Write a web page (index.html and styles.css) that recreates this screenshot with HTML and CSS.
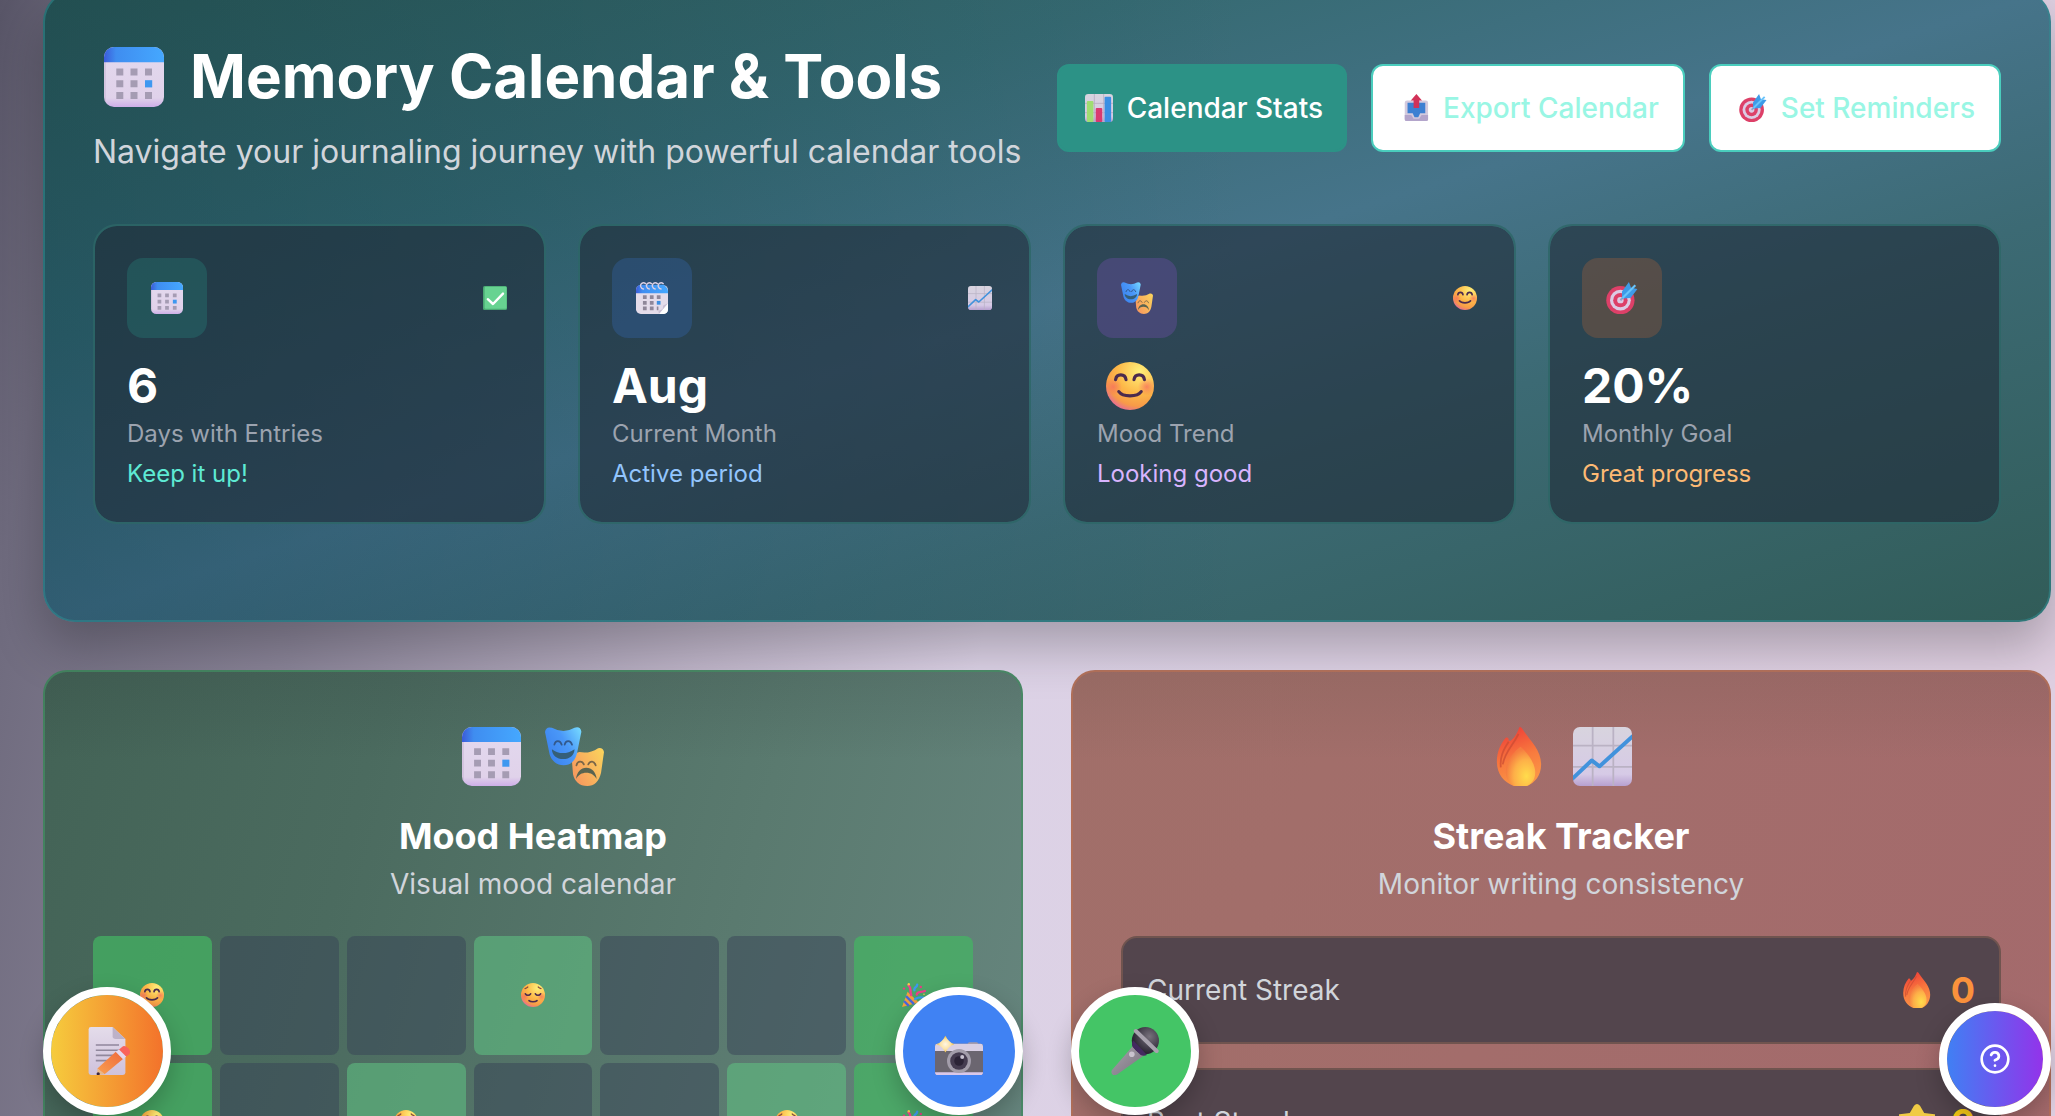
FILE: index.html
```
<!DOCTYPE html>
<html lang="en">
<head>
<meta charset="utf-8">
<title>Memory Calendar &amp; Tools</title>
<link rel="stylesheet" href="styles.css">
</head>
<body>
<svg class="sprite" width="0" height="0" aria-hidden="true">
  <defs>
    <linearGradient id="g-head" x1="0" x2="1"><stop offset="0" stop-color="#3b5bd9"/><stop offset=".2" stop-color="#3f8df0"/><stop offset="1" stop-color="#45a8ff"/></linearGradient>
    <linearGradient id="g-paper" x1="0" x2="0" y1="0" y2="1"><stop offset="0" stop-color="#e3d9ee"/><stop offset=".85" stop-color="#e0d2ea"/><stop offset="1" stop-color="#cdaee8"/></linearGradient>
    <linearGradient id="g-maskb" x1="0" x2="1" y1=".6" y2="0"><stop offset="0" stop-color="#3c83ee"/><stop offset=".5" stop-color="#4a98f8"/><stop offset="1" stop-color="#78dcff"/></linearGradient>
    <linearGradient id="g-masky" x1="0" x2="1" y1=".6" y2="0"><stop offset="0" stop-color="#f79a5e"/><stop offset="1" stop-color="#fbd65c"/></linearGradient>
    <radialGradient id="g-face" cx=".7" cy=".2" r=".85"><stop offset="0" stop-color="#fff07a"/><stop offset=".55" stop-color="#fdb848"/><stop offset=".85" stop-color="#f79a48"/><stop offset="1" stop-color="#e8728c"/></radialGradient>
    <radialGradient id="g-cheek"><stop offset="0" stop-color="#f76f5e" stop-opacity=".75"/><stop offset="1" stop-color="#f76f5e" stop-opacity="0"/></radialGradient>
    <linearGradient id="g-flame" x1=".4" x2=".7" y1="0" y2="1"><stop offset="0" stop-color="#ee4038"/><stop offset=".5" stop-color="#f87a3e"/><stop offset="1" stop-color="#fb9a48"/></linearGradient>
    <radialGradient id="g-flamein" cx=".7" cy=".75" r=".7"><stop offset="0" stop-color="#ffdc4c"/><stop offset=".6" stop-color="#fdb048"/><stop offset="1" stop-color="#f57c40"/></radialGradient>
    <linearGradient id="g-chart" x1="0" x2="0" y1="0" y2="1"><stop offset="0" stop-color="#d8d4de"/><stop offset=".8" stop-color="#d6cae6"/><stop offset="1" stop-color="#b7a0d0"/></linearGradient>
    <linearGradient id="g-pencil" x1="0" x2="1" y1="1" y2="0"><stop offset="0" stop-color="#f9a050"/><stop offset="1" stop-color="#ee6a3c"/></linearGradient>
    <linearGradient id="g-doc" x1="0" x2="0" y1="0" y2="1"><stop offset="0" stop-color="#e4dcea"/><stop offset="1" stop-color="#cfc2dc"/></linearGradient>
    <linearGradient id="g-mic" x1="0" x2="1" y1="0" y2="1"><stop offset="0" stop-color="#aaa4ae"/><stop offset="1" stop-color="#77707c"/></linearGradient>
    <radialGradient id="g-michead" cx=".65" cy=".35" r=".6"><stop offset="0" stop-color="#77717c"/><stop offset="1" stop-color="#2c2735"/></radialGradient>
    <radialGradient id="g-spark"><stop offset="0" stop-color="#fff6e4"/><stop offset=".6" stop-color="#fbe2a4"/><stop offset="1" stop-color="#f0bf3e"/></radialGradient>
    <clipPath id="c-cal"><rect width="60" height="60" rx="10"/></clipPath>
    <clipPath id="c-chart"><rect width="60" height="60" rx="7"/></clipPath>
  </defs>
  <symbol id="calendar" viewBox="0 0 60 60">
    <g clip-path="url(#c-cal)"><path fill="url(#g-paper)" d="M0 0h60v60H0z"/><path fill="#b9a6c8" opacity=".35" d="M0 15h2v45H0z"/><path fill="url(#g-head)" d="M0 0h60v15.2H0z"/></g>
    <path fill="#a59cb3" d="M12.3 21.5h7v7h-7zM26.5 21.5h7v7h-7zM41 21.5h7v7h-7zM12.3 33.2h7v7h-7zM26.5 33.2h7v7h-7zM12.3 45h7v7h-7zM26.5 45h7v7h-7zM41 45h7v7h-7z"/>
    <path fill="#3e98f0" d="M41 33.2h7.2v7.2H41z"/>
  </symbol>
  <symbol id="spiral" viewBox="0 0 60 60">
    <rect y="6" width="60" height="54" rx="9" fill="#e4dcea"/>
    <path fill="url(#g-head)" d="M0 21v-5Q0 6 9 5h43q8 6 8 13v3z"/>
    <path fill="#fff" d="M60 40 43 60h9q8-1 8-9z"/><path fill="#c9bfd4" d="m60 40-17 20-1-6 8-3 1-7z"/>
    <path fill="#8f8799" d="M13 25h7v7h-7zM26 25h7v7h-7zM39 25h7v7h-7zM13 35.500h7v7h-7zM26 35.500h7v7h-7zM13 46h7v7h-7zM26 46h7v7h-7zM39 46h3v7h-3z"/>
    <path fill="#3e8fe0" d="M39 35.500h7v7h-7z"/>
    <g fill="none" stroke="#d9cfe4" stroke-width="2.600" stroke-linecap="round"><path d="M18 3c-5-4-11 1-9 6 1 3 3 4 5 4"/><path d="M29 3c-5-4-11 1-9 6 1 3 3 4 5 4"/><path d="M40 3c-5-4-11 1-9 6 1 3 3 4 5 4"/><path d="M51 3c-5-4-11 1-9 6 1 3 3 4 5 4"/></g>
  </symbol>
  <symbol id="masks" viewBox="0 0 60 60">
    <path fill="url(#g-masky)" d="M27 30Q32 26 35 25.500q10 2 19-4 5-1 6 4l-3 21c-2 9-7 13.500-14 13.500-8 0-13-5-14.500-12z"/>
    <g fill="none" stroke="#7a6648" stroke-width="1.800" stroke-linecap="round"><path d="M32 39c1-5 6-5 7.500-1M44 38c2-4 6-4 7.500 1"/></g>
    <path fill="#5a6450" d="M31.500 53c1-7.500 5-11.500 10.500-11.500S52 46 52.500 53c-2.500-4.500-6-6.500-10.500-6.500S34 48.500 31.500 53z"/>
    <path fill="url(#g-maskb)" d="M0 5Q1-1 7 .8q12 6.500 23 0 6-1.800 7 4L32.500 27C31 34 26 39 19 39S6 34 4.500 27z"/>
    <g fill="none" stroke="#33598c" stroke-width="1.800" stroke-linecap="round"><path d="M9.500 18c1-5 6-5 7.500 0M20 18c1-5 6-5 7.500 0"/></g>
    <path fill="#355f78" d="M7 22.500q11 8 23 0c0 6-5 10-11.500 10S7 28.500 7 22.500z"/>
  </symbol>
  <symbol id="smile" viewBox="0 0 60 60">
    <circle cx="30" cy="30" r="30" fill="url(#g-face)"/><circle cx="9" cy="31" r="11" fill="url(#g-cheek)"/><circle cx="51" cy="31" r="11" fill="url(#g-cheek)"/>
    <path d="M12 22c1-8 12-8 13 0M35 22c1-8 12-8 13 0M16 37c5 7 23 7 28 0" fill="none" stroke="#4b2b4e" stroke-width="4" stroke-linecap="round"/>
  </symbol>
  <symbol id="relieved" viewBox="0 0 60 60">
    <circle cx="30" cy="30" r="30" fill="url(#g-face)"/><circle cx="9" cy="34" r="11" fill="url(#g-cheek)"/><circle cx="51" cy="34" r="11" fill="url(#g-cheek)"/>
    <path d="M11 27c3 5 10 5 13 0M36 27c3 5 10 5 13 0M20 44c4 4 16 4 20 0" fill="none" stroke="#4b2b4e" stroke-width="4" stroke-linecap="round"/><path d="M10 14q4-1 7-4M50 14q-4-1-7-4" fill="none" stroke="#8a4a3c" stroke-width="3" stroke-linecap="round"/>
  </symbol>
  <symbol id="flame" viewBox="0 0 60 60">
    <path fill="url(#g-flame)" d="M30 0c2 0 3 2 5 5 7 10 17 19 17 33 0 12-7 19-14 22H24C14 56 7 48 7 35c0-10 4-18 9-24 2-1 3 0 3 3l2 0c5-4 7-9 9-14z"/>
    <path fill="none" stroke="#c94a32" stroke-width="1.800" opacity=".7" d="M19 15c-6 9-9 16-8 26M29 7c-5 11-14 18-16 31"/>
    <path fill="url(#g-flamein)" d="M31 20c5 4 15 16 15 26 0 8-4 12-9 14H25c-6-3-9-8-9-15 0-9 7-19 15-25z"/>
  </symbol>
  <symbol id="trend" viewBox="0 0 60 60">
    <g clip-path="url(#c-chart)"><path fill="url(#g-chart)" d="M0 0h60v60H0z"/><path d="M20 0v60M41 0v60M0 19h60M0 40.500h60" stroke="#bab2c4" stroke-width="1.800"/><path d="M-1 53 19 34l8 6L61 9" fill="none" stroke="#4192dc" stroke-width="4" stroke-linejoin="round"/></g>
  </symbol>
  <symbol id="check" viewBox="0 0 60 60">
    <rect width="60" height="60" rx="4" fill="#4aa873"/><rect x="4" y="2" width="55" height="55" rx="3" fill="#67d391"/><path d="m12 33 13 12 25-26" fill="none" stroke="#fff" stroke-width="6" stroke-linecap="round" stroke-linejoin="round"/>
  </symbol>
  <symbol id="target" viewBox="0 0 60 60">
    <circle cx="27" cy="34" r="26.500" fill="#dd4068"/><circle cx="27" cy="34" r="19.500" fill="#dccbe4"/><circle cx="27" cy="34" r="13.500" fill="#dd4068"/><circle cx="27" cy="34" r="6" fill="#dccbe4"/>
    <path d="m27 34 14-14" stroke="#93a2c8" stroke-width="4"/><path d="M30 31V18L43 0l4 11 12 2-13 17z" fill="#3e9be8"/><path d="M31 30 55 6" stroke="#68c4fb" stroke-width="4"/>
  </symbol>
  <symbol id="bars" viewBox="0 0 60 60">
    <g clip-path="url(#c-chart)"><path fill="url(#g-chart)" d="M0 0h60v60H0z"/><path d="M20 0v60M40 0v60M0 20h60M0 40h60" stroke="#b7adc2" stroke-width="1.800"/></g>
    <rect x="4" y="15" width="14" height="45" rx="2" fill="#a0dd72"/><rect x="23" y="30" width="14" height="30" rx="2" fill="#da3a70"/><rect x="42" y="6" width="14" height="54" rx="2" fill="#3b8fe4"/>
  </symbol>
  <symbol id="outbox" viewBox="-3 0 60 60">
    <rect x="5" y="14" width="50" height="44" rx="5" fill="#d3cade"/><path fill="#3d80d2" d="M11 19h38v22H38l-4 9h-8l-4-9H11z"/><path fill="#b3a5cb" d="M5 45h14l5 8h12l5-8h14v10q0 3-4 3H9q-4 0-4-3z"/><path fill="#d23258" d="m30 0 12 14h-6v16H24V14h-6z"/>
  </symbol>
  <symbol id="party" viewBox="0 0 60 60">
    <path fill="#f5a13c" d="m14 22 28 27L0 60z"/><path d="m10 33 20 20M5 45l12 12" stroke="#4a68dc" stroke-width="6"/>
    <path fill="none" stroke="#ee3f8c" stroke-width="6" stroke-linecap="round" d="M16 6c8 6 3 12 7 24M37 29c0-9 12-5 20-9"/>
    <path fill="none" stroke="#3c9aee" stroke-width="6" stroke-linecap="round" d="M38 4c0 8-9 6-7 14M33 40c8-5 14-6 24-2"/>
    <circle cx="17" cy="3" r="3" fill="#fbc84a"/><circle cx="5" cy="14" r="3" fill="#e63c84"/><circle cx="47" cy="10" r="3" fill="#e63c84"/><circle cx="55" cy="28" r="2" fill="#fbc84a"/>
  </symbol>
  <symbol id="memo" viewBox="0 0 60 60">
    <path fill="url(#g-doc)" d="M7 3q0-3 3-3h27l16 15v42q0 3-3 3H10q-3 0-3-3z"/><path fill="#bdb2c8" d="M37 0v12q0 3 4 3h12z"/><path d="M16 22.500h29M16 29h29M16 35.500h24M16 42h18" stroke="#90879c" stroke-width="2"/>
    <path fill="url(#g-pencil)" d="m41 31 9 9-23 19-9-7z"/><path fill="#e4d8ee" d="m41 31 4-3 9 9-4 3z"/><path fill="#f9635c" d="m45 28 5-4q4-1 7 3t1 7l-4 3z"/><path fill="#e8b888" d="m18 52 9 7-9 1z"/><circle cx="19" cy="58.500" r="2" fill="#3b2740"/>
  </symbol>
  <symbol id="camera" viewBox="0 0 60 60">
    <rect x="41" y="19" width="13" height="4" rx="2" fill="#a29aac"/><rect y="21" width="60" height="39" rx="3" fill="#6b6670"/><path fill="#d9d0e4" d="M0 30v-6q0-3 3-3h54q3 0 3 3v6z"/><path fill="#d9c8ea" d="M0 56.500h60q0 3.500-3 3.500H3q-3 0-3-3.500z"/>
    <circle cx="30" cy="42.500" r="15" fill="#a39daa"/><circle cx="30" cy="42.500" r="11" fill="#453c50"/><circle cx="30" cy="42.500" r="6" fill="#2b2336"/><circle cx="34" cy="37.500" r="2.500" fill="#c8c2d0"/>
    <path fill="url(#g-spark)" d="M13 11q4 8 11 10.500-7 2.500-11 10.500-4-8-11-10.500Q9 19 13 11z"/>
  </symbol>
  <symbol id="mic" viewBox="0 0 60 60">
    <path fill="url(#g-mic)" d="M29 22 42 35 8 59q-5 3-7-1-1-2 0-4z"/><circle cx="43" cy="17" r="17" fill="url(#g-michead)"/><path fill="#43295f" d="m28 17 17 18q-4 2-8 0L27 25q-2-4 1-8z"/><path d="m31 5 26 25" stroke="#a8a2ae" stroke-width="5" stroke-linecap="round"/><circle cx="26" cy="34" r="3.500" fill="#c9c3ce"/>
  </symbol>
  <symbol id="star" viewBox="0 0 60 60">
    <path fill="#f0cb45" d="M25 3q5-6 10 0l7 12 17 2q5 1 1 6L47 36l3 18q0 6-5 4L30 50l-15 8q-5 2-5-4l3-18L0 23q-4-5 1-6l17-2z"/>
  </symbol>
</svg>

<main class="page">
  <section class="hero">
    <header class="hero-head">
      <div>
        <h1><svg class="i60"><use href="#calendar"/></svg>Memory Calendar &amp; Tools</h1>
        <p class="lead">Navigate your journaling journey with powerful calendar tools</p>
      </div>
      <div class="actions">
        <button class="btn btn-solid"><svg><use href="#bars"/></svg>Calendar Stats</button>
        <button class="btn"><svg><use href="#outbox"/></svg>Export Calendar</button>
        <button class="btn"><svg><use href="#target"/></svg>Set Reminders</button>
      </div>
    </header>
    <div class="stats">
      <article class="stat teal">
        <div class="stat-top"><span class="tile"><svg><use href="#calendar"/></svg></span><svg class="mini"><use href="#check"/></svg></div>
        <div class="value">6</div><div class="label">Days with Entries</div><div class="note">Keep it up!</div>
      </article>
      <article class="stat blue">
        <div class="stat-top"><span class="tile"><svg><use href="#spiral"/></svg></span><svg class="mini"><use href="#trend"/></svg></div>
        <div class="value">Aug</div><div class="label">Current Month</div><div class="note">Active period</div>
      </article>
      <article class="stat purple">
        <div class="stat-top"><span class="tile"><svg><use href="#masks"/></svg></span><svg class="mini"><use href="#smile"/></svg></div>
        <div class="value"><svg><use href="#smile"/></svg></div><div class="label">Mood Trend</div><div class="note">Looking good</div>
      </article>
      <article class="stat orange">
        <div class="stat-top"><span class="tile"><svg><use href="#target"/></svg></span></div>
        <div class="value">20%</div><div class="label">Monthly Goal</div><div class="note">Great progress</div>
      </article>
    </div>
  </section>

  <div class="tools">
    <section class="tool heatmap">
      <div class="art"><svg class="i60"><use href="#calendar"/></svg><svg class="i60"><use href="#masks"/></svg></div>
      <h2>Mood Heatmap</h2>
      <p>Visual mood calendar</p>
      <div class="cells">
        <span class="cell high"><svg><use href="#smile"/></svg></span><span class="cell"></span><span class="cell"></span><span class="cell mid"><svg><use href="#relieved"/></svg></span><span class="cell"></span><span class="cell"></span><span class="cell high"><svg><use href="#party"/></svg></span>
        <span class="cell high"><svg><use href="#smile"/></svg></span><span class="cell"></span><span class="cell mid"><svg><use href="#relieved"/></svg></span><span class="cell"></span><span class="cell"></span><span class="cell mid"><svg><use href="#relieved"/></svg></span><span class="cell high"><svg><use href="#party"/></svg></span>
      </div>
      <button class="fab fab-write"><svg><use href="#memo"/></svg></button>
      <button class="fab fab-photo"><svg><use href="#camera"/></svg></button>
    </section>
    <section class="tool streak">
      <div class="art"><svg class="i60"><use href="#flame"/></svg><svg class="i60"><use href="#trend"/></svg></div>
      <h2>Streak Tracker</h2>
      <p>Monitor writing consistency</p>
      <div class="rows">
        <div class="row"><span>Current Streak</span><span class="count"><svg><use href="#flame"/></svg>0</span></div>
        <div class="row"><span>Best Streak</span><span class="count best"><svg><use href="#star"/></svg>0</span></div>
      </div>
      <button class="fab fab-voice"><svg><use href="#mic"/></svg></button>
      <button class="fab fab-help"><svg viewBox="0 0 24 24" fill="none" stroke="#fff" stroke-width="2" stroke-linecap="round" stroke-linejoin="round"><circle cx="12" cy="12" r="10"/><path d="M9.090 9a3 3 0 0 1 5.830 1c0 2-3 3-3 3"/><path d="M12 17h.01"/></svg></button>
    </section>
  </div>
</main>
</body>
</html>
```
FILE: styles.css
```
* { box-sizing: border-box; }

html, body { height: 100%; overflow: hidden; }

body {
  margin: 0;
  font-family: Inter, "Liberation Sans", sans-serif;
  color: #fff;
  background:
    linear-gradient(100deg, #585567 0, #6f6b7e 100px, #8a8498 400px, #bfb5c9 800px, #dcd2e6 1080px, #dfcfe1 2055px);
}

h1, h2, p { margin: 0; }
button { font-family: inherit; padding: 0; border: 0; }
.sprite { position: absolute; }

.page { padding: 0 4px 0 43px; }

/* Hero panel */
.hero {
  height: 632px;
  margin-top: -10px;
  padding: 48px;
  border: 2px solid rgba(48, 140, 146, .55);
  border-radius: 32px;
  background:
    linear-gradient(90deg, rgba(0, 40, 60, .3), rgba(0, 40, 60, 0) 60%) border-box,
    linear-gradient(to bottom right, #305f59 0, #366a72 28%, #46748a 50%, #3c6a74 68%, #315c58 100%) border-box;
  box-shadow: 0 25px 50px rgba(0, 0, 0, .25);
}

.hero-head { display: flex; justify-content: space-between; align-items: center; height: 136px; }

h1 { display: flex; align-items: center; gap: 26px; padding-left: 11px; font-size: 60px; line-height: 72px; font-weight: 700; white-space: nowrap; }
.i60 { width: 60px; height: 60px; }
h1 .i60 { margin-top: 1px; }
.lead { margin-top: 16px; font-size: 32px; line-height: 48px; color: #d1d5db; white-space: nowrap; }

.actions { display: flex; gap: 24px; }
.btn {
  display: flex; align-items: center; gap: 14px;
  height: 88px; padding: 0 24px 0 28px;
  border: 2px solid #4acdbd; border-radius: 12px;
  background: #fff; color: #99f6e4;
  font-size: 28px; font-weight: 500; white-space: nowrap;
}
.btn svg { width: 28px; height: 28px; }
.btn-solid { border-color: #2c9286; background: #2c9286; color: #fff; padding: 0 22px 0 26px; }

.stats { display: grid; grid-template-columns: repeat(4, 1fr); gap: 32px; margin-top: 48px; }
.stat { padding: 32px; border: 2px solid rgba(45, 102, 103, .8); border-radius: 24px; background: rgba(31, 41, 55, .6) padding-box; }
.stat-top { display: flex; justify-content: space-between; align-items: center; height: 80px; margin-bottom: 15px; }
.tile { display: grid; place-items: center; width: 80px; height: 80px; border-radius: 16px; }
.tile svg { width: 32px; height: 32px; }
.mini { width: 24px; height: 24px; margin-right: 5px; }
.value { display: flex; align-items: center; height: 64px; margin-bottom: 1px; font-size: 48px; font-weight: 700; }
.value svg { width: 48px; height: 48px; margin: 2px 0 0 9px; }
.label, .note { font-size: 24px; line-height: 32px; }
.label { color: #9ca3af; }
.note { margin-top: 8px; }
.teal .tile { background: rgba(40, 180, 160, .2); }
.teal .note { color: #5eead4; }
.blue .tile { background: rgba(59, 130, 246, .2); }
.blue .note { color: #93c5fd; }
.purple .tile { background: rgba(168, 85, 247, .2); }
.purple .note { color: #d8b4fe; }
.orange .tile { background: rgba(249, 115, 42, .2); }
.orange .note { color: #fdba74; }

/* Tool panels */
.tools { display: grid; grid-template-columns: 1fr 1fr; gap: 48px; margin-top: 48px; }
.tool { position: relative; height: 700px; padding: 48px; border-radius: 24px; text-align: center; }
.heatmap {
  border: 2px solid rgba(67, 140, 98, .75);
  background:
    linear-gradient(rgba(40, 50, 50, .16), rgba(40, 50, 50, 0) 90px) border-box,
    linear-gradient(105deg, #436356 0, #4b6b5f 30%, #5a7a6f 65%, #688780 100%) border-box;
}
.streak {
  border: 2px solid rgba(184, 112, 84, .7);
  background:
    linear-gradient(rgba(100, 80, 70, .18), rgba(100, 80, 70, 0) 90px) border-box,
    linear-gradient(120deg, #a16f69 0, #a36d6b 45%, #a4696c 100%) border-box;
}
.art { display: flex; justify-content: center; align-items: center; gap: 24px; height: 72px; padding-top: 1px; margin-bottom: 16px; }
.art svg { width: 59px; height: 59px; }
h2 { font-size: 36px; line-height: 56px; font-weight: 700; }
.tool p { font-size: 28px; line-height: 40px; color: #d1d5db; }

.cells { display: grid; grid-template-columns: repeat(7, 1fr); gap: 8px; margin-top: 32px; }
.cell { display: grid; place-items: center; aspect-ratio: 1; border-radius: 8px; background: rgba(55, 65, 85, .48); }
.cell svg { width: 24px; height: 24px; }
.cell.high { background: rgba(68, 182, 98, .72); }
.cell.mid { background: rgba(95, 190, 128, .6); }

.rows { display: grid; gap: 24px; margin-top: 32px; }
.row {
  display: flex; justify-content: space-between; align-items: center;
  height: 108px; padding: 0 24px;
  border: 2px solid #70544f; border-radius: 16px;
  background: #53454d; color: #d1d5db; font-size: 28px;
}
.count { display: flex; align-items: center; gap: 16px; font-size: 36px; font-weight: 700; color: #fb923c; }
.count svg { width: 36px; height: 36px; }
.count.best { color: #facc15; }

/* Floating action buttons */
.fab {
  position: absolute; top: 315px;
  display: grid; place-items: center;
  width: 128px; height: 128px;
  border: 8px solid #fff; border-radius: 50%;
  box-shadow: 0 10px 24px rgba(0, 0, 0, .22);
}
.fab svg { width: 48px; height: 48px; }
.fab-write { left: -2px; background: linear-gradient(90deg, #f6cc3d, #f3722b) padding-box; }
.fab-photo { right: -2px; background: #4082f3; }
.fab-voice { left: -2px; background: #44c566; }
.fab-help { right: -2px; top: 331px; width: 112px; height: 112px; background: linear-gradient(90deg, #4080f4, #9333ea) padding-box; }
.fab-help svg { width: 32px; height: 32px; }
```
